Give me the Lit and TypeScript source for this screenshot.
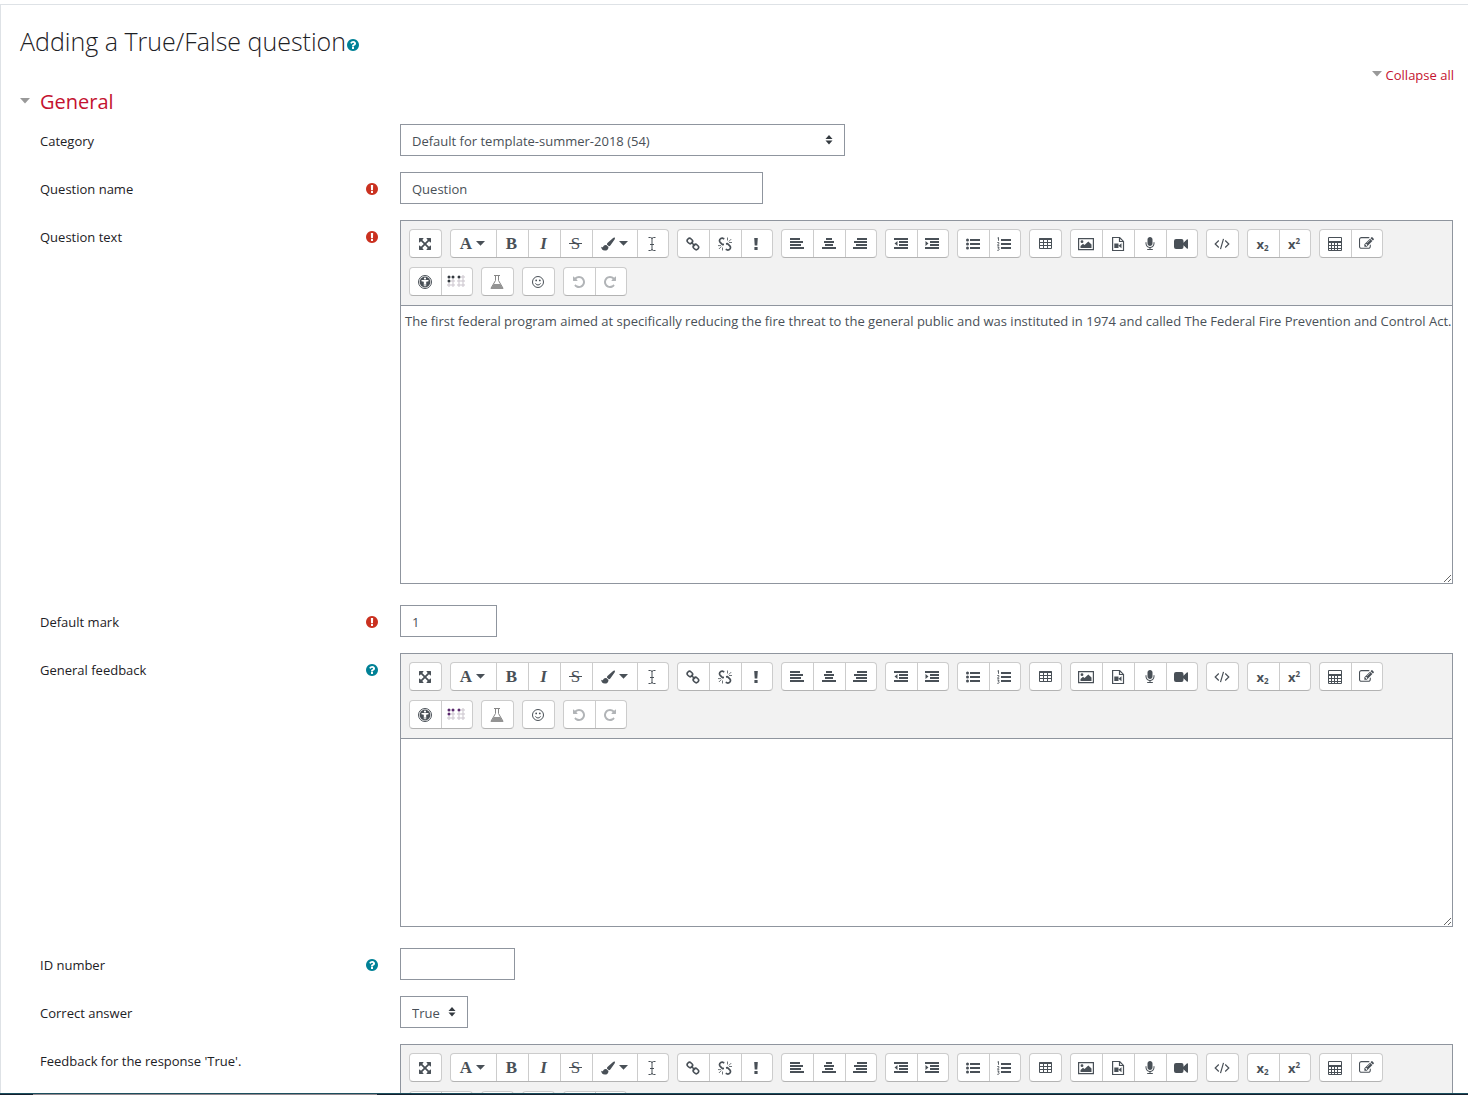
import { LitElement, html, css, svg, nothing, TemplateResult } from "lit";
import { customElement, property } from "lit/decorators.js";

const box14 = (body: TemplateResult) =>
  html`<svg viewBox="0 0 14 14" width="14" height="14" aria-hidden="true">${body}</svg>`;
const box1792 = (d: string, size = 14) =>
  html`<svg viewBox="0 0 1792 1792" width=${size} height=${size} aria-hidden="true"><path d=${d} fill="currentColor"/></svg>`;

const QUESTION =
  "M1024 1376v-192q0-14-9-23t-23-9h-192q-14 0-23 9t-9 23v192q0 14 9 23t23 9h192q14 0 23-9t9-23zm256-672q0-88-55.5-163t-138.5-116-170-41q-243 0-371 213-15 24 8 42l132 100q7 6 19 6 16 0 25-12 53-68 86-92 34-24 86-24 48 0 85.5 26t37.5 59q0 38-20 61t-68 45q-63 28-115.5 86.5t-52.5 125.5v36q0 14 9 23t23 9h192q14 0 23-9t9-23q0-19 21.5-49.5t54.5-49.5q32-18 49-28.5t46-35 44.5-48 28-60.5 12.5-81zm384 192q0 209-103 385.5t-279.5 279.5-385.5 103-385.5-103-279.5-279.5-103-385.5 103-385.5 279.5-279.5 385.5-103 385.5 103 279.5 279.5 103 385.5z";
const REQUIRED =
  "M896 128q209 0 385.5 103t279.5 279.5 103 385.5-103 385.5-279.5 279.5-385.5 103-385.5-103-279.5-279.5-103-385.5 103-385.5 279.5-279.5 385.5-103zm128 1247v-190q0-14-9-23.5t-22-9.5h-192q-13 0-23 10t-10 23v190q0 13 10 23t23 10h192q13 0 22-9.5t9-23.5zm-2-344l18-621q0-12-10-18-10-8-24-8h-220q-14 0-24 8-10 6-10 18l17 621q0 10 10 17.5t24 7.5h185q14 0 23.5-7.5t10.5-17.5z";
const EXPAND =
  "M1411 541l-355 355 355 355 144-144q29-31 70-14 39 17 39 59v448q0 26-19 45t-45 19h-448q-42 0-59-40-17-39 14-69l144-144-355-355-355 355 144 144q31 30 14 69-17 40-59 40h-448q-26 0-45-19t-19-45v-448q0-42 40-59 39-17 69 14l144 144 355-355-355-355-144 144q-19 19-45 19-12 0-24-5-40-17-40-59v-448q0-26 19-45t45-19h448q42 0 59 40 17 39-14 69l-144 144 355 355 355-355-144-144q-31-30-14-69 17-40 59-40h448q26 0 45 19t19 45v448q0 42-39 59-13 5-25 5-26 0-45-19z";
const EDIT =
  "M888 1184l116-116-152-152-116 116v56h96v96h56zm440-720q-16-16-33 1l-350 350q-17 17-1 33t33-1l350-350q17-17 1-33zm80 594v190q0 119-84.5 203.5t-203.5 84.5h-832q-119 0-203.5-84.5t-84.5-203.5v-832q0-119 84.5-203.5t203.5-84.5h832q63 0 117 25 15 7 18 23 3 17-9 29l-49 49q-14 14-32 8-23-6-45-6h-832q-66 0-113 47t-47 113v832q0 66 47 113t113 47h832q66 0 113-47t47-113v-126q0-13 9-22l64-64q15-15 35-7t20 29zm-96-738l288 288-672 672h-288v-288zm444 132l-92 92-288-288 92-92q28-28 68-28t68 28l152 152q28 28 28 68t-28 68z";
const REDO =
  "M1664 256v448q0 26-19 45t-45 19h-448q-42 0-59-40-17-39 14-69l138-138q-148-137-349-137-104 0-198.5 40.5t-163.5 109.5-109.5 163.5-40.5 198.5 40.5 198.5 109.5 163.5 163.5 109.5 198.5 40.5q119 0 225-52t179-147q7-10 23-12 15 0 25 9l137 138q9 8 9.5 20.5t-7.5 22.5q-109 132-264 204.5t-327 72.5q-156 0-298-61t-245-164-164-245-61-298 61-298 164-245 245-164 298-61q147 0 284.5 55.5t244.5 156.5l130-129q29-31 70-14 39 17 39 59z";
const MIC =
  "M1472 704v128q0 221-147.5 384.5t-364.5 187.5v132h256q26 0 45 19t19 45-19 45-45 19h-640q-26 0-45-19t-19-45 19-45 45-19h256v-132q-217-24-364.5-187.5t-147.5-384.5v-128q0-26 19-45t45-19 45 19 19 45v128q0 185 131.5 316.5t316.5 131.5 316.5-131.5 131.5-316.5v-128q0-26 19-45t45-19 45 19 19 45zm-256-384v512q0 132-94 226t-226 94-226-94-94-226v-512q0-132 94-226t226-94 226 94 94 226z";

const bars = (rows: [number, number][]) =>
  box14(svg`${rows.map(([x, w], i) => svg`<rect x=${x} y=${1 + i * 3} width=${w} height="2" fill="currentColor"/>`)}`);

const caret = html`<svg viewBox="0 0 9 5" width="9" height="5" aria-hidden="true"><path d="M0 0h9L4.500 4.800z" fill="currentColor"/></svg>`;

const dots = [0, 1, 2, 3].flatMap((c) =>
  [0, 1, 2].map((r) => {
    const on = (c === 0 && r < 2) || (c === 1 && r === 0) || (c === 2 && r === 0);
    return { x: [2, 6, 12, 16][c], y: 3 + r * 4, on };
  }),
);

const ICONS: Record<string, TemplateResult> = {
  expand: box1792(EXPAND),
  brush: box14(svg`<path d="M13.6.5c.6.5.4 1.200 0 1.900L9.500 8.200c-.4.600-1 .9-1.600 1L5.900 7.500c0-.8.300-1.300.8-1.800L12.100.9c.5-.4 1-.7 1.500-.4zM5.300 8l2.200 1.900c0 2.300-1.500 3.700-3.700 3.700C1.400 13.600.3 12 .2 9.800c.7.500 1.300.7 1.800.2C2.500 8.600 3.700 7.700 5.300 8z" fill="currentColor"/>`),
  cursor: box14(svg`<path d="M3.500.5h2q1.500 0 1.500 1.500q0-1.500 1.500-1.500h2M3.500 13.500h2q1.500 0 1.500-1.500q0 1.500 1.500 1.500h2M7 2v10M5 7.500h4" fill="none" stroke="currentColor"/>`),
  link: box14(svg`<g fill="none" stroke="currentColor" stroke-width="1.600"><rect x="1.100" y="1.700" width="5.600" height="4.600" rx="2.200" transform="rotate(45 3.900 4)"/><rect x="7.100" y="7.700" width="5.600" height="4.600" rx="2.200" transform="rotate(45 9.900 10)"/><path d="M5 5l4 4"/></g>`),
  unlink: box14(svg`<g fill="none" stroke="currentColor" stroke-width="1.700"><path d="M6.300 1.900L4.600 1.200Q2.900.9 1.900 2.400Q1 4 2.200 5.300L4.500 7.500L6 7.300M7.700 12.200L9.400 13Q11 13.200 12.100 11.700Q13 10.200 11.800 8.900L9.500 6.600L8 6.800"/><path d="M9.500.5v3M10.800 4.500l2.400-2.400M11 5.500h3M4.500 10.500v3M3.300 9.600L.9 12M0 8.600h3" stroke-width=".8"/></g>`),
  bang: box14(svg`<path d="M5.200 1h3.600l-.5 7.500H5.700zM5.400 10h3.200v3H5.400z" fill="currentColor"/>`),
  left: bars([[0, 10], [0, 13], [0, 11], [0, 14]]),
  center: bars([[4, 6], [2, 10], [3, 8], [0, 14]]),
  right: bars([[4, 10], [1, 13], [3, 11], [0, 14]]),
  outdent: box14(svg`<path d="M0 1h14v2H0zM5 4h9v2H5zM5 7h9v2H5zM0 10h14v2H0zM3.500 4v5L.5 6.500z" fill="currentColor"/>`),
  indent: box14(svg`<path d="M0 1h14v2H0zM5 4h9v2H5zM5 7h9v2H5zM0 10h14v2H0zM.5 4v5l3-2.500z" fill="currentColor"/>`),
  ul: box14(svg`<path d="M4 2h10v2H4zM4 6h10v2H4zM4 10h10v2H4z" fill="currentColor"/><g fill="currentColor"><circle cx="1.500" cy="3" r="1.500"/><circle cx="1.500" cy="7" r="1.500"/><circle cx="1.500" cy="11" r="1.500"/></g>`),
  ol: box14(svg`<path d="M4 2h10v2H4zM4 6h10v2H4zM4 10h10v2H4z" fill="currentColor"/><path d="M.5 1L1.500.5v3.300M.3 5.500h1.500v1L.5 8.300h1.800M.3 10h1.800L1.300 11.300q1 0 .8 1.200t-1.800.8" fill="none" stroke="currentColor" stroke-width=".9"/>`),
  table: box14(svg`<path d="M1.500 1.500h12v10H1.500z" fill="none" stroke="currentColor"/><path d="M1.500 1h12v2H1.500z" fill="currentColor"/><path d="M5.500 3v9M9.500 3v9M1.500 5.500h12M1.500 8.500h12" stroke="currentColor" fill="none"/>`),
  image: html`<svg viewBox="0 0 16 14" width="16" height="14" aria-hidden="true"><path d="M.6 1.600h14.800v11H.6z" fill="none" stroke="currentColor" stroke-width="1.200"/><circle cx="4" cy="4.700" r="1.400" fill="currentColor"/><path d="M2.500 11V9l2.500-2.300L6.500 8l3.800-3.600L13.500 7.500V11z" fill="currentColor"/></svg>`,
  filevideo: box14(svg`<path d="M1.600.5h7l3.900 3.900v9.100H1.600zM8.500.5v4h4" fill="none" stroke="currentColor" stroke-width="1.200"/><path d="M3.300 6.500h4.200v4.500H3.300zM7.500 8.700l3-2.500V11.300z" fill="currentColor"/>`),
  mic: box1792(MIC),
  video: box14(svg`<path d="M2 2h5.500q2 0 2 2v1.800L12.800 2.500q1.200-.6 1.200.4v8.200q0 1-1.200.4L9.500 8.200V10q0 2-2 2H2q-2 0-2-2V4q0-2 2-2z" fill="currentColor"/>`),
  code: html`<svg viewBox="0 0 16 14" width="16" height="14" aria-hidden="true"><path d="M4.800 3.500L1.200 7l3.600 3.500M11.200 3.500L14.800 7l-3.600 3.500M9.500 1.800l-3 10.400" fill="none" stroke="currentColor" stroke-width="1.200"/></svg>`,
  calc: box14(svg`<path d="M.5.5h13v13H.5z" fill="none" stroke="currentColor"/><path d="M.5 4h13v2H.5z" fill="currentColor"/><path d="M3.500 5v9M6.500 5v9M9.500 5v9M.5 8.500h13M.5 11.500h13" stroke="currentColor" fill="none"/>`),
  edit: box1792(EDIT, 15),
  access: box14(svg`<circle cx="7" cy="7" r="6.500" fill="none" stroke="currentColor"/><circle cx="7" cy="7" r="5.400" fill="currentColor"/><circle cx="7" cy="3.600" r="1.100" fill="#fff"/><path d="M3.500 5h7v1.200L8.200 6.700v4.500h-.9V9h-.6v2.200h-.9V6.700L3.500 6.200z" fill="#fff"/>`),
  flask: html`<svg viewBox="0 0 14 16" width="14" height="16" aria-hidden="true"><path d="M4 1.500h6M5.500 1.500v5L1 14.200h12L8.500 6.500v-5" fill="none" stroke="#868686"/><path d="M3.700 10h6.600l3.200 5H.5z" fill="#949494"/></svg>`,
  smile: box14(svg`<circle cx="7" cy="7" r="5.500" fill="none" stroke="currentColor"/><path d="M4.500 8.300q.6 1.700 2.500 1.700t2.500-1.700" fill="none" stroke="currentColor"/><circle cx="5.200" cy="5.400" r=".9" fill="currentColor"/><circle cx="8.800" cy="5.400" r=".9" fill="currentColor"/>`),
  undo: html`<svg viewBox="0 0 1792 1792" width="14" height="14" aria-hidden="true"><path d=${REDO} transform="matrix(-1 0 0 1 1792 0)" fill="currentColor"/></svg>`,
  redo: box1792(REDO),
  font: html`<span class="serif bold">A</span>`,
  bold: html`<span class="serif bold">B</span>`,
  italic: html`<span class="serif bold slant">I</span>`,
  strike: html`<span class="serif strike">S</span>`,
  sub: html`<span class="script">x<sub>2</sub></span>`,
  sup: html`<span class="script">x<sup>2</sup></span>`,
};

type Tool = { icon: string; label: string; menu?: boolean; off?: boolean };
const t = (icon: string, label: string, extra: Partial<Tool> = {}): Tool => ({ icon, label, ...extra });

const ROWS: Tool[][][] = [
  [
    [t("expand", "Toggle full screen")],
    [
      t("font", "Paragraph styles", { menu: true }),
      t("bold", "Bold"),
      t("italic", "Italic"),
      t("strike", "Strike through"),
      t("brush", "Font colour", { menu: true }),
      t("cursor", "Clear formatting"),
    ],
    [t("link", "Link"), t("unlink", "Unlink"), t("bang", "Prevent automatic link")],
    [t("left", "Align left"), t("center", "Centre"), t("right", "Align right")],
    [t("outdent", "Outdent"), t("indent", "Indent")],
    [t("ul", "Unordered list"), t("ol", "Ordered list")],
    [t("table", "Table")],
    [t("image", "Image"), t("filevideo", "Media"), t("mic", "Record audio"), t("video", "Record video")],
    [t("code", "HTML")],
    [t("sub", "Subscript"), t("sup", "Superscript")],
    [t("calc", "Equation editor"), t("edit", "Insert character")],
  ],
  [
    [t("access", "Accessibility checker"), t("braille", "Screenreader helper")],
    [t("flask", "Chemistry editor")],
    [t("smile", "Emoji picker")],
    [t("undo", "Undo", { off: true }), t("redo", "Redo", { off: true })],
  ],
];

@customElement("rich-editor")
class RichEditor extends LitElement {
  @property() name = "";
  @property() label = "";
  @property() value = "";
  @property({ type: Boolean }) tall = false;
  @property() dotColor = "#343a40";

  static styles = css`
    :host {
      display: block;
      border: 1px solid #8f959e;
      color: #495057;
    }
    .toolbar {
      display: flex;
      flex-direction: column;
      gap: 9px;
      padding: 8px 8px 9px;
      background: #f2f2f2;
      border-bottom: 1px solid #8f959e;
    }
    .line {
      display: flex;
      flex-wrap: wrap;
      gap: 8px;
    }
    .group {
      display: flex;
      border: 1px solid #ccc;
      border-bottom-color: #b3b3b3;
      border-radius: 4px;
      background: #fff;
      overflow: hidden;
    }
    button {
      display: flex;
      align-items: center;
      justify-content: center;
      gap: 4px;
      box-sizing: border-box;
      width: 32px;
      height: 27px;
      margin: 0;
      padding: 0 2px 0 0;
      border: 0;
      border-left: 1px solid #ccc;
      background: none;
      color: inherit;
    }
    button:first-child,
    button:last-child {
      width: 31px;
    }
    button:first-child {
      border-left: 0;
    }
    button.menu,
    button.menu:first-child {
      width: 45px;
    }
    button:disabled {
      color: #b1b4b7;
    }
    svg {
      display: block;
      flex: none;
    }
    .serif {
      font: 17px/20px "Liberation Serif", serif;
    }
    .bold {
      font-weight: 700;
    }
    .slant {
      font-style: italic;
    }
    .strike {
      padding: 0 2px;
      background: linear-gradient(currentColor, currentColor) center / 100% 1px no-repeat;
    }
    .script {
      font: 700 13px/20px "Open Sans", sans-serif;
    }
    sub,
    sup {
      font-size: 8px;
      line-height: 0;
    }
    sub {
      vertical-align: -2px;
    }
    textarea {
      display: block;
      box-sizing: border-box;
      width: 100%;
      height: 187px;
      min-height: 60px;
      margin: 0;
      padding: 5px 0 5px 4px;
      border: 0;
      outline: 0;
      resize: vertical;
      background: #fff;
      color: #495057;
      font: 13px/21px "Open Sans", "Noto Sans", sans-serif;
    }
    textarea.tall {
      height: 277px;
    }
  `;

  icon(name: string) {
    if (name !== "braille") return ICONS[name];
    return html`<svg viewBox="0 0 18 14" width="18" height="14" aria-hidden="true">
      ${dots.map((d) =>
        d.on
          ? svg`<circle cx=${d.x} cy=${d.y - 1} r="1.500" fill=${this.dotColor}/>`
          : svg`<circle cx=${d.x} cy=${d.y - 1} r="1.200" fill="none" stroke="#c0b8c2" stroke-width=".9"/>`,
      )}
    </svg>`;
  }

  render() {
    return html`
      <div class="toolbar" role="toolbar" aria-label=${this.label}>
        ${ROWS.map(
          (row) => html`<div class="line">
            ${row.map(
              (group) => html`<div class="group">
                ${group.map(
                  (tool) => html`<button type="button" class=${tool.menu ? "menu" : nothing} ?disabled=${!!tool.off} aria-label=${tool.label}>${this.icon(tool.icon)}${tool.menu ? caret : nothing}</button>`,
                )}
              </div>`,
            )}
          </div>`,
        )}
      </div>
      <textarea class=${this.tall ? "tall" : ""} name=${this.name} aria-label=${this.label} spellcheck="false" .value=${this.value}></textarea>
    `;
  }
}

@customElement("app-root")
class AppRoot extends LitElement {
  static styles = css`
    :host {
      display: flex;
      flex-direction: column;
      box-sizing: border-box;
      height: 100vh;
      overflow: hidden;
      background: #fff;
      color: #1d2125;
      font: 13px/20px "Open Sans", "Noto Sans", sans-serif;
    }
    main {
      flex: 1;
      min-height: 0;
      overflow: hidden;
      margin-top: 4px;
      padding: 19px 14px 0 19px;
      border-top: 1px solid #dee2e6;
      border-left: 1px solid #dee2e6;
    }
    h2,
    h3 {
      margin: 0;
      font-weight: 400;
    }
    h2 {
      display: flex;
      align-items: center;
      font-size: 25px;
      line-height: 34px;
      font-weight: 300;
    }
    h2 .help {
      padding-top: 7px;
    }
    h3 {
      font-size: 20px;
      line-height: 26px;
    }
    a {
      display: flex;
      align-items: center;
      color: #c41230;
      text-decoration: none;
    }
    a svg {
      padding-bottom: 3px;
    }
    .collapse {
      display: flex;
      justify-content: flex-end;
      margin-top: 7px;
    }
    .collapse a {
      gap: 4px;
    }
    .section {
      gap: 10px;
    }
    .legend {
      display: flex;
      margin-top: 4px;
      margin-bottom: 9px;
    }
    svg {
      display: block;
      flex: none;
    }
    .help {
      display: flex;
      margin: 0;
      padding: 0;
      border: 0;
      background: none;
      color: #008196;
    }
    .required {
      color: #ca3120;
    }
    .rows {
      padding: 0 1px 0 20px;
    }
    .row {
      display: grid;
      grid-template-columns: 360px minmax(0, 1fr);
      margin-bottom: 16px;
    }
    .row.wide {
      margin-bottom: 21px;
    }
    .caption {
      display: flex;
      align-items: center;
      justify-content: space-between;
      box-sizing: border-box;
      height: 32px;
      padding: 2px 21px 0 0;
    }
    input,
    select {
      box-sizing: border-box;
      height: 32px;
      margin: 0;
      padding: 2px 11px 0;
      border: 1px solid #8f959e;
      border-radius: 0;
      background: #fff;
      color: #495057;
      font: inherit;
      appearance: none;
    }
    .name {
      width: 363px;
    }
    .mark {
      width: 97px;
    }
    .idnumber {
      width: 115px;
    }
    .pick {
      position: relative;
      justify-self: start;
      display: flex;
    }
    .pick svg {
      position: absolute;
      right: 12px;
      top: 11px;
      pointer-events: none;
    }
    .category {
      width: 445px;
    }
    .answer {
      width: 68px;
    }
    .taskbar {
      display: flex;
      flex: none;
      height: 1px;
      padding-left: 33px;
      border-top: 1px solid #1c4f5e;
      background: #16202e;
    }
    .search {
      width: 344px;
      background: #93898f;
    }
  `;

  help = (what: string) =>
    html`<button type="button" class="help" aria-label=${"Help with " + what}>${box1792(QUESTION)}</button>`;

  mark = html`<span class="required" title="Required">${box1792(REQUIRED)}</span>`;

  triangle = html`<svg viewBox="0 0 10 6" width="10" height="6" aria-hidden="true"><path d="M0 0h10L5 5.500z" fill="#999"/></svg>`;

  arrows = html`<svg viewBox="0 0 8 10" width="8" height="10" aria-hidden="true"><path d="M4 0l3.500 4H.5zM4 9.500l3.500-4H.5z" fill="#343a40"/></svg>`;

  row(id: string, label: string, extra: unknown, control: unknown, wide = false) {
    return html`<div class=${wide ? "row wide" : "row"}>
      <div class="caption"><label for=${id}>${label}</label>${extra}</div>
      ${control}
    </div>`;
  }

  render() {
    return html`
      <main>
        <h2>Adding a True/False question${this.help("True/False")}</h2>
        <div class="collapse"><a href="#collapse">${this.triangle}Collapse all</a></div>
        <div class="legend"><h3><a class="section" href="#general">${this.triangle}General</a></h3></div>
        <div class="rows">
          ${this.row("category", "Category", nothing, html`<div class="pick"><select id="category" class="category"><option>Default for template-summer-2018 (54)</option></select>${this.arrows}</div>`)}
          ${this.row("name", "Question name", this.mark, html`<input id="name" class="name" type="text" .value=${"Question"} />`)}
          ${this.row("text", "Question text", this.mark, html`<rich-editor id="text" name="questiontext" label="Question text" tall .value=${"The first federal program aimed at specifically reducing the fire threat to the general public and was instituted in 1974 and called The Federal Fire Prevention and Control Act."}></rich-editor>`, true)}
          ${this.row("mark", "Default mark", this.mark, html`<input id="mark" class="mark" type="text" .value=${"1"} />`)}
          ${this.row("feedback", "General feedback", this.help("General feedback"), html`<rich-editor id="feedback" name="generalfeedback" label="General feedback" .dotColor=${"#5b2a6e"}></rich-editor>`, true)}
          ${this.row("idnumber", "ID number", this.help("ID number"), html`<input id="idnumber" class="idnumber" type="text" />`)}
          ${this.row("answer", "Correct answer", nothing, html`<div class="pick"><select id="answer" class="answer"><option>True</option><option>False</option></select>${this.arrows}</div>`)}
          ${this.row("fbtrue", "Feedback for the response 'True'.", nothing, html`<rich-editor id="fbtrue" name="feedbacktrue" label="Feedback for the response 'True'."></rich-editor>`, true)}
        </div>
      </main>
      <div class="taskbar"><div class="search"></div></div>
    `;
  }
}
